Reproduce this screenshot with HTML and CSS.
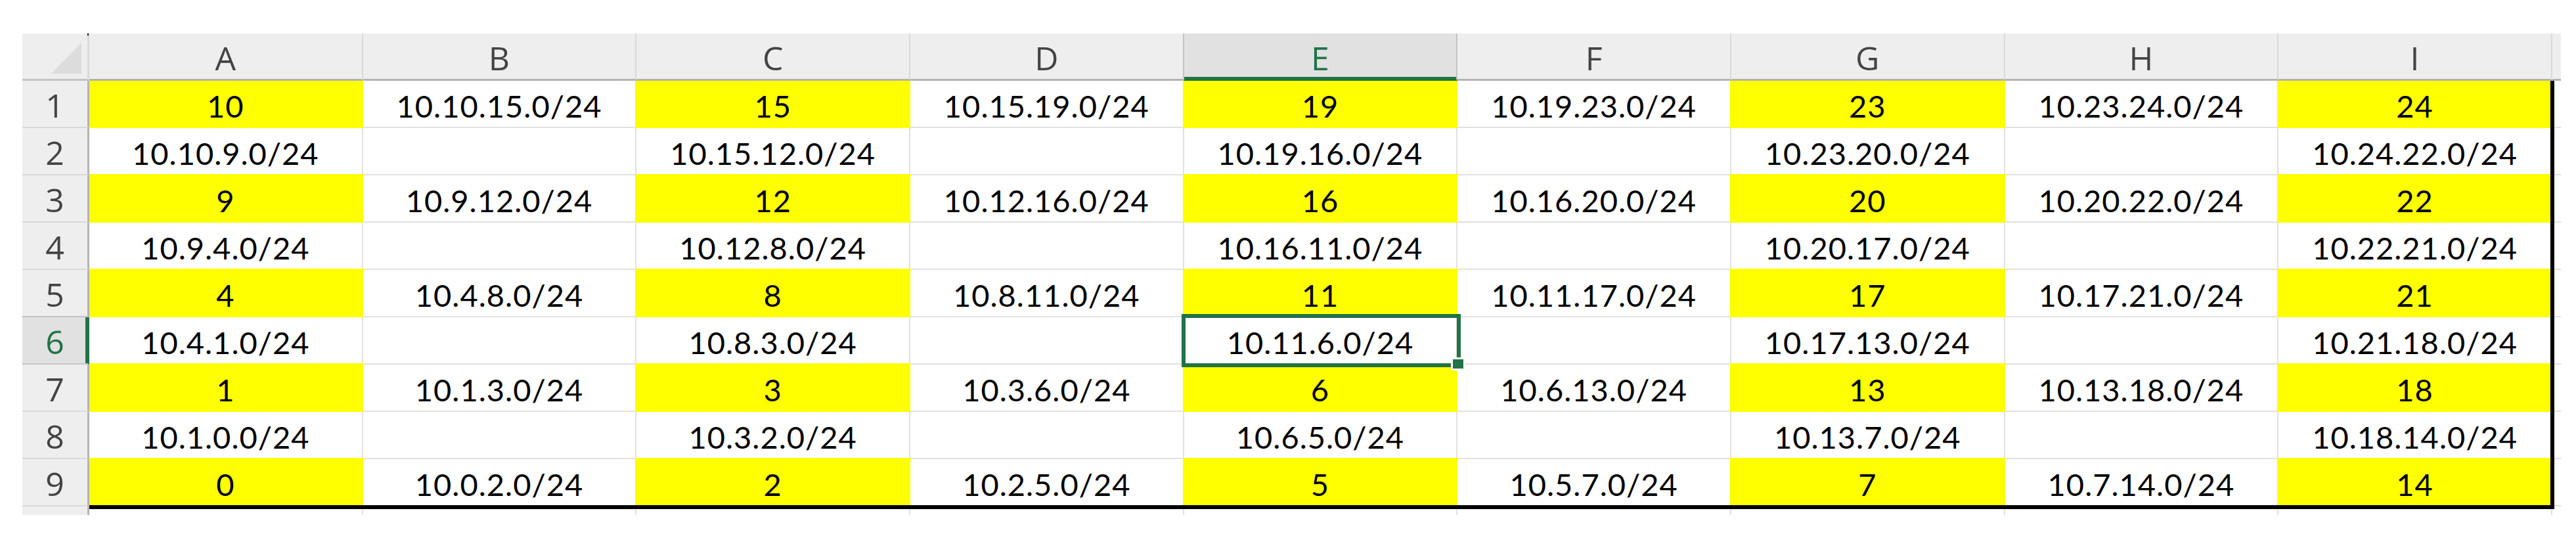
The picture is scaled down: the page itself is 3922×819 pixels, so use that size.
FILE: index.html
```html
<!DOCTYPE html>
<html lang="en">
<head>
<meta charset="utf-8">
<title>Sheet</title>
<link rel="stylesheet" href="styles.css">
</head>
<body>
<div class="page">
  <div class="sheet">
    <div class="grid cells">
      <div class="corner"><span class="tri"></span></div>
      <div class="ch">A</div><div class="ch">B</div><div class="ch">C</div><div class="ch pre-sel">D</div><div class="ch sel">E</div><div class="ch">F</div><div class="ch">G</div><div class="ch">H</div><div class="ch">I</div><div class="ch sliver"></div>

      <div class="rh">1</div>
      <div class="c y">10</div><div class="c">10.10.15.0/24</div><div class="c y">15</div><div class="c">10.15.19.0/24</div><div class="c y">19</div><div class="c">10.19.23.0/24</div><div class="c y">23</div><div class="c">10.23.24.0/24</div><div class="c y">24</div><div class="c j"></div>

      <div class="rh">2</div>
      <div class="c">10.10.9.0/24</div><div class="c"></div><div class="c">10.15.12.0/24</div><div class="c"></div><div class="c">10.19.16.0/24</div><div class="c"></div><div class="c">10.23.20.0/24</div><div class="c"></div><div class="c">10.24.22.0/24</div><div class="c j"></div>

      <div class="rh">3</div>
      <div class="c y">9</div><div class="c">10.9.12.0/24</div><div class="c y">12</div><div class="c">10.12.16.0/24</div><div class="c y">16</div><div class="c">10.16.20.0/24</div><div class="c y">20</div><div class="c">10.20.22.0/24</div><div class="c y">22</div><div class="c j"></div>

      <div class="rh">4</div>
      <div class="c">10.9.4.0/24</div><div class="c"></div><div class="c">10.12.8.0/24</div><div class="c"></div><div class="c">10.16.11.0/24</div><div class="c"></div><div class="c">10.20.17.0/24</div><div class="c"></div><div class="c">10.22.21.0/24</div><div class="c j"></div>

      <div class="rh pre-sel">5</div>
      <div class="c y">4</div><div class="c">10.4.8.0/24</div><div class="c y">8</div><div class="c">10.8.11.0/24</div><div class="c y">11</div><div class="c">10.11.17.0/24</div><div class="c y">17</div><div class="c">10.17.21.0/24</div><div class="c y">21</div><div class="c j"></div>

      <div class="rh sel">6</div>
      <div class="c">10.4.1.0/24</div><div class="c"></div><div class="c">10.8.3.0/24</div><div class="c"></div><div class="c">10.11.6.0/24</div><div class="c"></div><div class="c">10.17.13.0/24</div><div class="c"></div><div class="c">10.21.18.0/24</div><div class="c j"></div>

      <div class="rh">7</div>
      <div class="c y">1</div><div class="c">10.1.3.0/24</div><div class="c y">3</div><div class="c">10.3.6.0/24</div><div class="c y">6</div><div class="c">10.6.13.0/24</div><div class="c y">13</div><div class="c">10.13.18.0/24</div><div class="c y">18</div><div class="c j"></div>

      <div class="rh">8</div>
      <div class="c">10.1.0.0/24</div><div class="c"></div><div class="c">10.3.2.0/24</div><div class="c"></div><div class="c">10.6.5.0/24</div><div class="c"></div><div class="c">10.13.7.0/24</div><div class="c"></div><div class="c">10.18.14.0/24</div><div class="c j"></div>

      <div class="rh">9</div>
      <div class="c y">0</div><div class="c">10.0.2.0/24</div><div class="c y">2</div><div class="c">10.2.5.0/24</div><div class="c y">5</div><div class="c">10.5.7.0/24</div><div class="c y">7</div><div class="c">10.7.14.0/24</div><div class="c y">14</div><div class="c j"></div>

      <div class="rh last"></div>
      <div class="c last"></div><div class="c last"></div><div class="c last"></div><div class="c last"></div><div class="c last"></div><div class="c last"></div><div class="c last"></div><div class="c last"></div><div class="c last"></div><div class="c last j"></div>
    </div>
    <div class="grid overlay">
      <div class="range"></div>
      <div class="selection"><span class="handle"></span></div>
    </div>
  </div>
</div>
</body>
</html>
```

FILE: styles.css
```css
html, body {
  margin: 0;
  padding: 0;
  background: #ffffff;
}
body {
  width: 3922px;
  height: 819px;
  overflow: hidden;
}
.page {
  padding: 51px 0 0 34px;
}
.sheet {
  display: grid;
  width: max-content;
}
.sheet > .grid {
  grid-area: 1 / 1;
}
.grid {
  display: grid;
  grid-template-columns: 102px repeat(9, 416.67px) 13px;
  grid-template-rows: 72px repeat(9, 72px) 13px;
}
.cells > div {
  box-sizing: border-box;
  display: flex;
  align-items: center;
  justify-content: center;
  white-space: nowrap;
}
.corner {
  position: relative;
  background: #eeeeee;
  border-right: 3px solid #dadada;
  border-bottom: 3px solid #c4c4c4;
  z-index: 1;
  justify-content: flex-end !important;
  align-items: flex-end !important;
  padding: 0 9px 8px 0;
}
.corner::after {
  content: "";
  position: absolute;
  top: 0;
  right: -2px;
  width: 2px;
  height: 3px;
  background: #000;
}
.tri {
  width: 46px;
  height: 47px;
  background: #dcdcdc;
  clip-path: polygon(100% 0, 100% 100%, 0 100%);
}
.ch, .rh {
  background: #eeeeee;
  color: #444444;
  font-family: "Open Sans", "Noto Sans", sans-serif;
  font-size: 50px;
  z-index: 1;
}
.ch {
  border-right: 2px solid #d9d9d9;
  border-bottom: 3px solid #b4b4b4;
  padding-top: 4px;
}
.ch.pre-sel {
  border-right-color: #c4c4c4;
}
.ch.sel {
  background: #e1e1e1;
  color: #217346;
  border-right-color: #c4c4c4;
  border-bottom-color: #217346;
  box-shadow: inset 0 -3px 0 #217346;
}
.ch.sliver {
  border-right: none;
}
.rh {
  border-right: 3px solid #b4b4b4;
  border-bottom: 2px solid #d9d9d9;
  padding-top: 4px;
}
.rh.pre-sel {
  border-bottom-color: #c4c4c4;
}
.rh.sel {
  background: #e1e1e1;
  color: #217346;
  border-right-color: #217346;
  border-bottom-color: #c4c4c4;
  box-shadow: inset -3px 0 0 #217346;
}
.rh.last {
  border-bottom: none;
}
.c {
  background: #ffffff;
  border-right: 2px solid #e1e1e1;
  border-bottom: 2px solid #e1e1e1;
  font-family: Lato, "Liberation Sans", sans-serif;
  font-size: 47px;
  letter-spacing: 1px;
  color: #000000;
  padding-top: 6px;
}
.c.j {
  border-right: none;
}
.c.last {
  border-bottom: none;
}
.c.y {
  background: #ffff00;
  border-color: #ffff00;
  box-shadow: 0 0 0 2px #ffff00;
}
.overlay {
  z-index: 2;
  pointer-events: none;
}
.range {
  grid-row: 2 / 11;
  grid-column: 2 / 11;
  border-right: 6px solid #000000;
  border-bottom: 6px solid #000000;
  margin: 0 -3px -4px 0;
}
.selection {
  grid-row: 7;
  grid-column: 6;
  position: relative;
  border: 6px solid #217346;
  margin: -5px -5px -4px -4px;
}
.handle {
  position: absolute;
  right: -10px;
  bottom: -8px;
  width: 16px;
  height: 14px;
  background: #217346;
  box-shadow: 0 0 0 3px #ffffff;
}
```
